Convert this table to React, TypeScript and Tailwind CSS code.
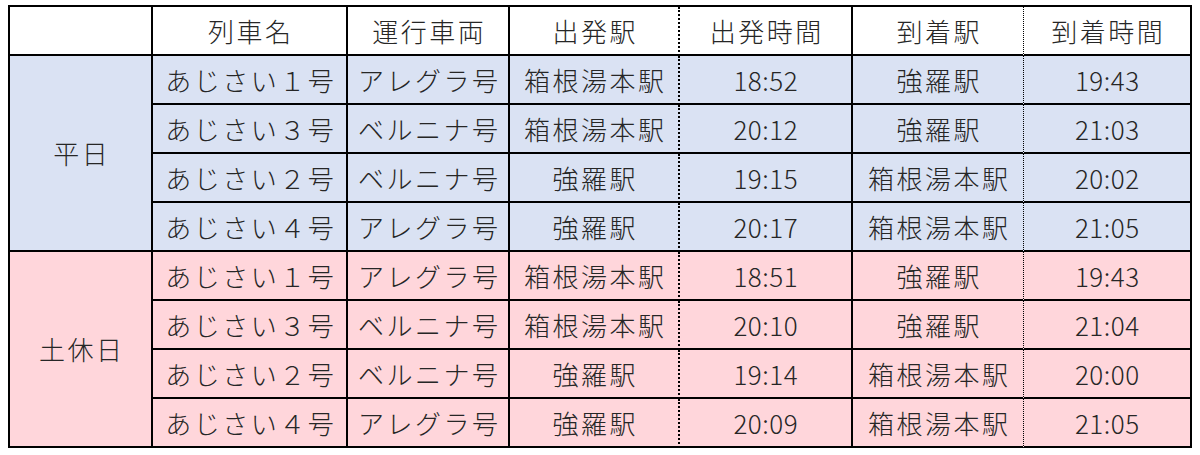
import React from "react";

const BLUE = "bg-[#dae2f3]";
const PINK = "bg-[#ffd6db]";

type Row = [string, string, string, string, string, string];

const weekday: Row[] = [
  ["あじさい１号", "アレグラ号", "箱根湯本駅", "18:52", "強羅駅", "19:43"],
  ["あじさい３号", "ベルニナ号", "箱根湯本駅", "20:12", "強羅駅", "21:03"],
  ["あじさい２号", "ベルニナ号", "強羅駅", "19:15", "箱根湯本駅", "20:02"],
  ["あじさい４号", "アレグラ号", "強羅駅", "20:17", "箱根湯本駅", "21:05"],
];
const holiday: Row[] = [
  ["あじさい１号", "アレグラ号", "箱根湯本駅", "18:51", "強羅駅", "19:43"],
  ["あじさい３号", "ベルニナ号", "箱根湯本駅", "20:10", "強羅駅", "21:04"],
  ["あじさい２号", "ベルニナ号", "強羅駅", "19:14", "箱根湯本駅", "20:00"],
  ["あじさい４号", "アレグラ号", "強羅駅", "20:09", "箱根湯本駅", "21:05"],
];

const cellBase =
  "flex items-center justify-center border-b-2 border-black text-[26px] font-light text-[#262626] leading-none";

// per-column right border classes (index 0..6)
const rightBorder = [
  "border-r-2 border-r-black",
  "border-r-2 border-r-black",
  "border-r-2 border-r-black",
  "border-r-2 border-r-black [border-right-style:dotted]",
  "border-r-2 border-r-black",
  "border-r border-r-black [border-right-style:dotted]",
  "border-r-2 border-r-black",
];

function Cell({ col, bg, time, children }: { col: number; bg: string; time?: boolean; children?: React.ReactNode }) {
  return (
    <div className={`${cellBase} ${rightBorder[col]} ${bg}`}>
      {time ? (
        <span className="inline-block tracking-[0.5px] pl-[0.5px]">{children}</span>
      ) : (
        <span className="inline-block tracking-[2.5px] pl-[2.5px]">{children}</span>
      )}
    </div>
  );
}

export default function App() {
  const headers = ["列車名", "運行車両", "出発駅", "出発時間", "到着駅", "到着時間"];
  const renderRows = (rows: Row[], bg: string, p: string) =>
    rows.map((r, ri) =>
      r.map((c, ci) => (
        <Cell key={`${p}${ri}-${ci}`} col={ci + 1} bg={bg} time={ci === 3 || ci === 5}>
          {c}
        </Cell>
      ))
    );
  return (
    <div className="w-[1200px] h-[455px] bg-white pt-[5px] pl-[8px]" style={{ fontFamily: '"Noto Sans CJK JP", "Noto Sans", sans-serif' }}>
      <div className="grid grid-cols-[143px_195px_162px_170px_173px_171px_168px] grid-rows-[repeat(9,49px)] w-fit border-t-2 border-l-2 border-black">
        <Cell col={0} bg="bg-white" />
        {headers.map((h, i) => (
          <Cell key={h} col={i + 1} bg="bg-white">
            {h}
          </Cell>
        ))}
        <div className={`row-span-4 ${cellBase} ${rightBorder[0]} ${BLUE}`}>
          <span className="inline-block tracking-[2.5px] pl-[2.5px]">平日</span>
        </div>
        {renderRows(weekday, BLUE, "w")}
        <div className={`row-span-4 ${cellBase} ${rightBorder[0]} ${PINK}`}>
          <span className="inline-block tracking-[2.5px] pl-[2.5px]">土休日</span>
        </div>
        {renderRows(holiday, PINK, "h")}
      </div>
    </div>
  );
}
